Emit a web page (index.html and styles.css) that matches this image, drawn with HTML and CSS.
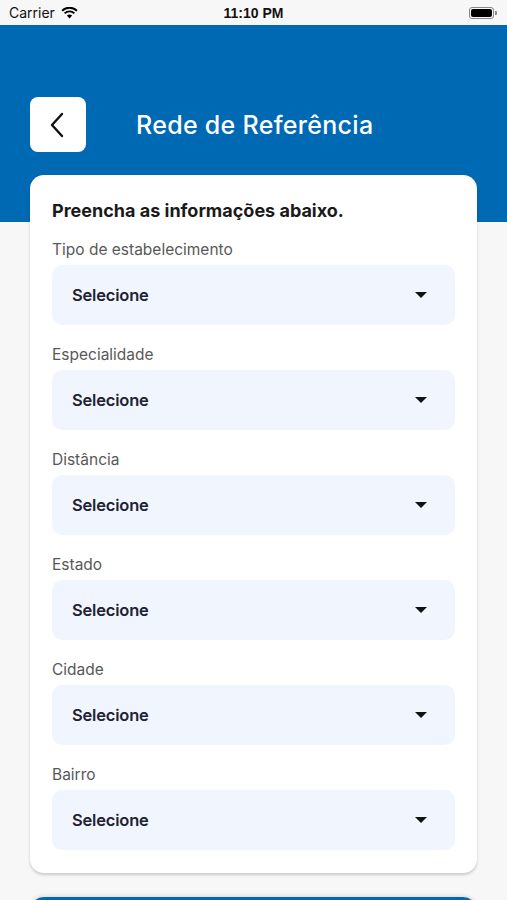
FILE: index.html
```html
<!DOCTYPE html>
<html lang="pt-BR">
<head>
    <meta charset="UTF-8">
    <meta name="viewport" content="width=device-width, initial-scale=1.0">
    <title>Rede de Referência</title>
    <link rel="stylesheet" href="styles.css">
</head>
<body>
    <div class="status-bar">
        <div class="status-left">
            <span>Carrier</span>
            <svg class="wifi" width="17" height="12" viewBox="0 0 17 12">
                <path d="M8.5 11.5 L5.9 8.6 A3.8 3.8 0 0 1 11.1 8.6 Z" fill="#000"/>
                <path d="M3.6 6.4 A7 7 0 0 1 13.4 6.4" stroke="#000" stroke-width="1.9" fill="none"/>
                <path d="M1.1 3.7 A10.6 10.6 0 0 1 15.9 3.7" stroke="#000" stroke-width="1.9" fill="none"/>
            </svg>
        </div>
        <span class="status-time">11:10 PM</span>
        <div class="status-right">
            <div class="battery"><div class="battery-level"></div></div>
            <div class="battery-cap"></div>
        </div>
    </div>

    <header class="header">
        <button class="back-btn" aria-label="Voltar">
            <svg width="14" height="26" viewBox="0 0 14 26">
                <path d="M12 2 L2 13 L12 24" stroke="#111" stroke-width="2.4" fill="none" stroke-linecap="round" stroke-linejoin="round"/>
            </svg>
        </button>
        <h1 class="header-title">Rede de Referência</h1>
    </header>

    <main class="card">
        <h2 class="card-title">Preencha as informações abaixo.</h2>

        <div class="field">
            <label class="field-label">Tipo de estabelecimento</label>
            <div class="select"><span>Selecione</span><i class="caret"></i></div>
        </div>
        <div class="field">
            <label class="field-label">Especialidade</label>
            <div class="select"><span>Selecione</span><i class="caret"></i></div>
        </div>
        <div class="field">
            <label class="field-label">Distância</label>
            <div class="select"><span>Selecione</span><i class="caret"></i></div>
        </div>
        <div class="field">
            <label class="field-label">Estado</label>
            <div class="select"><span>Selecione</span><i class="caret"></i></div>
        </div>
        <div class="field">
            <label class="field-label">Cidade</label>
            <div class="select"><span>Selecione</span><i class="caret"></i></div>
        </div>
        <div class="field">
            <label class="field-label">Bairro</label>
            <div class="select"><span>Selecione</span><i class="caret"></i></div>
        </div>
    </main>

    <div class="search-btn"></div>
</body>
</html>
```

FILE: styles.css
```css
* {
    margin: 0;
    padding: 0;
    box-sizing: border-box;
    font-family: 'Inter', 'Noto Sans', sans-serif;
}

body {
    background: #f7f7f7;
    overflow: hidden;
    height: 900px;
}

.status-bar {
    height: 25px;
    display: flex;
    align-items: center;
    justify-content: space-between;
    padding: 0 10px 0 9px;
    background: #f7f7f7;
    position: relative;
}

.status-left {
    display: flex;
    align-items: center;
    gap: 6px;
    font-family: 'Liberation Sans', sans-serif;
    font-size: 14px;
    color: #111;
}

.status-time {
    position: absolute;
    left: 0;
    right: 0;
    text-align: center;
    font-family: 'Liberation Sans', sans-serif;
    font-weight: bold;
    font-size: 14px;
    color: #111;
}

.status-right {
    display: flex;
    align-items: center;
    gap: 1px;
}

.battery {
    width: 25px;
    height: 12px;
    border: 1px solid #888;
    border-radius: 3px;
    padding: 1px;
}

.battery-level {
    width: 100%;
    height: 100%;
    background: #000;
    border-radius: 2px;
}

.battery-cap {
    width: 2px;
    height: 4px;
    background: #888;
    border-radius: 0 1px 1px 0;
}

.header {
    background: #0069b4;
    padding: 72px 30px 70px;
    display: flex;
    align-items: center;
    gap: 50px;
}

.back-btn {
    width: 56px;
    height: 55px;
    border: none;
    border-radius: 8px;
    background: #fff;
    display: flex;
    align-items: center;
    justify-content: center;
    padding-right: 2px;
}

.header-title {
    color: #fff;
    font-size: 25px;
    font-weight: 500;
    letter-spacing: 0.3px;
}

.card {
    margin: -47px 30px 0;
    background: #fff;
    border-radius: 14px;
    box-shadow: 0 2px 3px rgba(0, 0, 0, 0.18);
    padding: 25px 22px 3px;
}

.card-title {
    font-size: 18px;
    font-weight: 700;
    color: #1a1a1a;
    line-height: 22px;
    letter-spacing: 0;
    margin-bottom: 18px;
}

.field {
    display: flex;
    flex-direction: column;
    gap: 5px;
    margin-bottom: 20px;
}

.field-label {
    font-size: 15.5px;
    line-height: 20px;
    color: #585858;
}

.select {
    height: 60px;
    background: #f1f6fe;
    border-radius: 10px;
    display: flex;
    align-items: center;
    justify-content: space-between;
    padding: 0 28px 0 20px;
    font-size: 16.5px;
    font-weight: 600;
    color: #1f2233;
    letter-spacing: -0.2px;
}

.caret {
    width: 0;
    height: 0;
    border-left: 6px solid transparent;
    border-right: 6px solid transparent;
    border-top: 6px solid #111;
}

.search-btn {
    margin: 24px 30px 0;
    height: 56px;
    border-radius: 14px;
    background: #0069b4;
    box-shadow: 0 -1px 4px rgba(0, 0, 0, 0.12);
}
```
